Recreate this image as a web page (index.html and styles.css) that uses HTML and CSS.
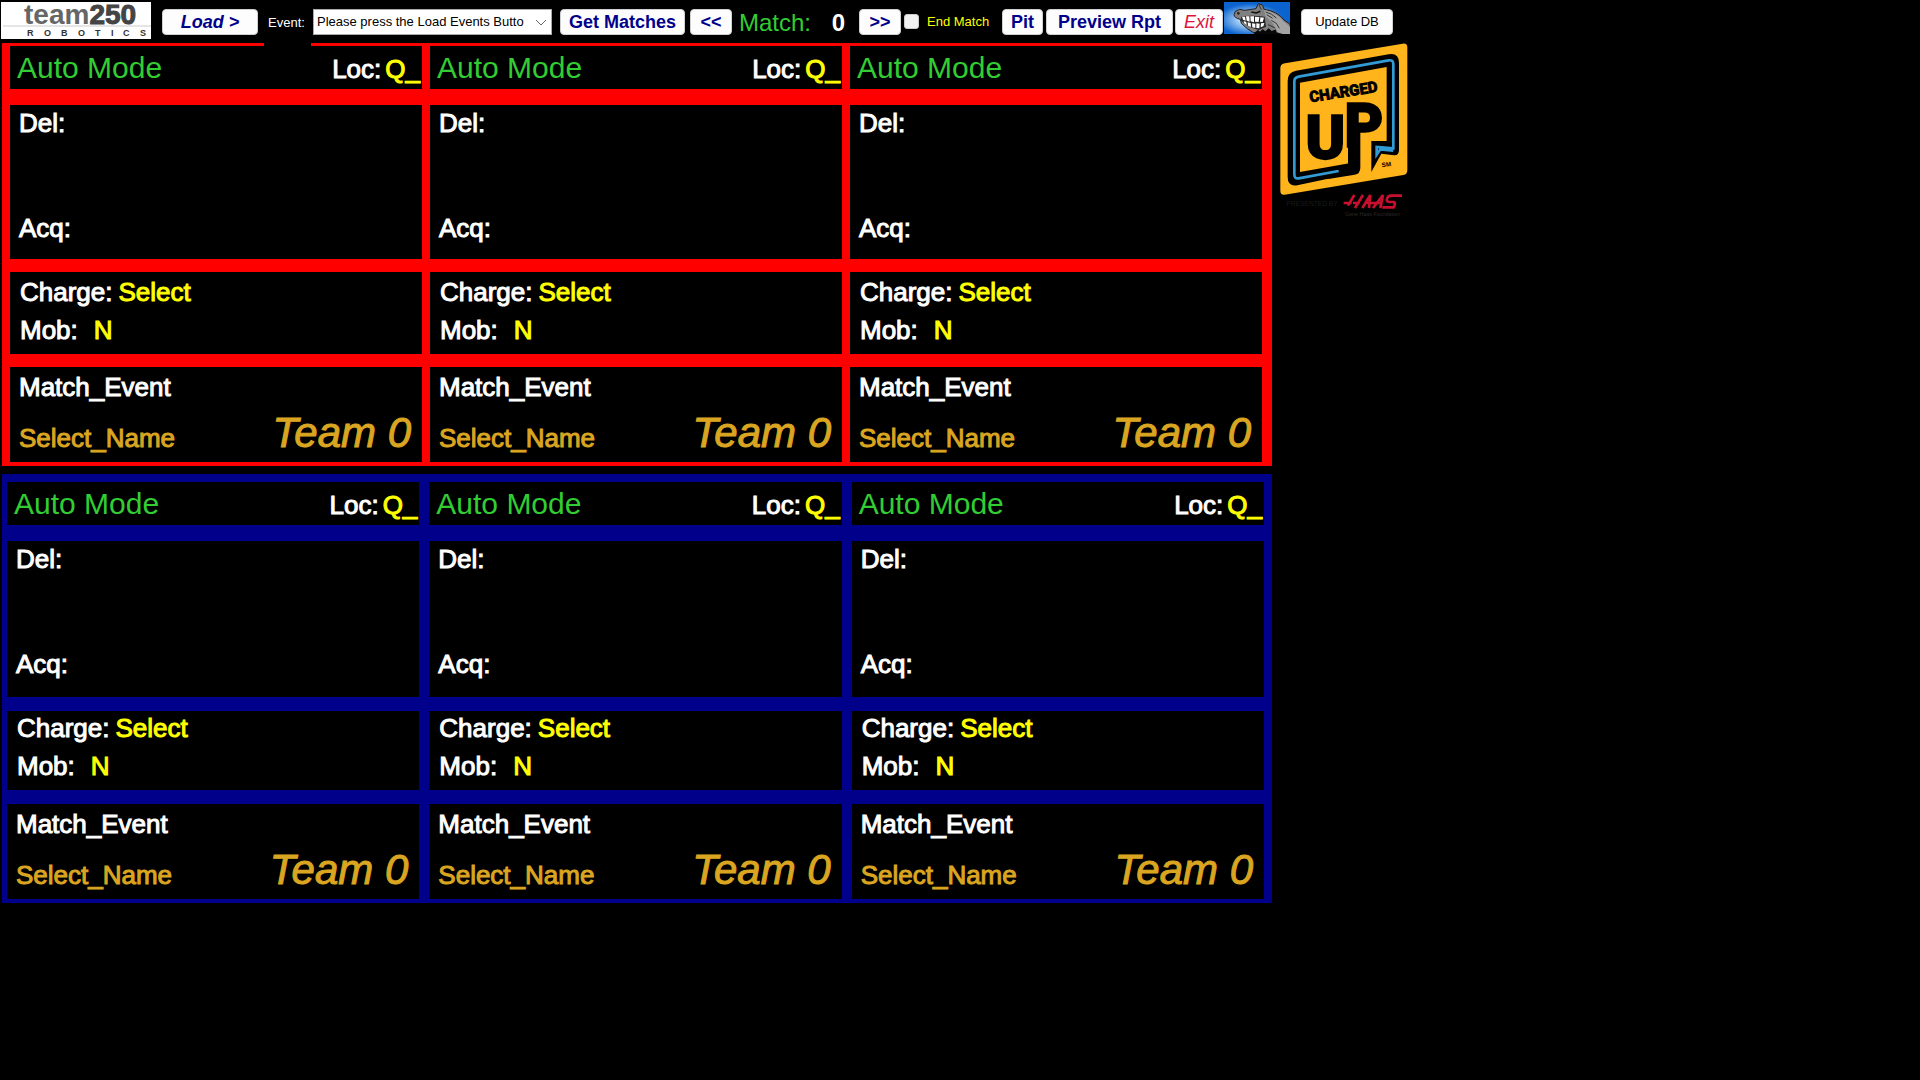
FILE: index.html
```html
<!DOCTYPE html>
<html lang="en">
<head>
<meta charset="utf-8">
<title>Team 250 Match Scouting</title>
<link rel="stylesheet" href="styles.css">
</head>
<body>
<header class="toolbar">
  <svg class="team-logo" viewBox="0 0 150 37" role="img" aria-label="team250 Robotics">
    <rect width="150" height="37" fill="#fff"/>
    <path d="M2 24H150" stroke="#ccc"/>
    <text x="23" y="22" class="logo-team">team<tspan class="logo-num">250</tspan></text>
    <text y="34" x="26 43 60 77 94 110 122 139" class="logo-sub">ROBOTICS</text>
  </svg>
  <button class="btn btn-load" type="button">Load &gt;</button>
  <label class="small event-label" for="event">Event:</label>
  <div class="select-wrap">
    <select id="event" class="event-select"><option>Please press the Load Events Butto</option></select>
    <svg class="chevron" viewBox="0 0 12 8" aria-hidden="true"><path d="M1 1l5 5 5-5" fill="none" stroke="#666"/></svg>
  </div>
  <button class="btn btn-matches" type="button">Get Matches</button>
  <button class="btn btn-step" type="button">&lt;&lt;</button>
  <div class="match"><span class="match-label">Match:</span><output class="match-number">0</output></div>
  <button class="btn btn-step" type="button">&gt;&gt;</button>
  <input class="end-check" type="checkbox" id="end-match">
  <label class="small end-label" for="end-match">End Match</label>
  <button class="btn btn-pit" type="button">Pit</button>
  <button class="btn btn-preview" type="button">Preview Rpt</button>
  <button class="btn btn-exit" type="button">Exit</button>
  <svg class="mascot" viewBox="0 0 198 96" role="img" aria-label="Team mascot">
    <defs><radialGradient id="glow" cx=".4" cy=".55" r=".5"><stop offset=".3" stop-color="#b9dcfb"/><stop offset="1" stop-color="#0a63cf"/></radialGradient></defs>
    <rect width="198" height="96" fill="url(#glow)"/>
    <path d="M34 28Q46 18 62 25L96 20 103 5 116 10 120 22Q160 27 180 54L198 66V96H104Q85 93 70 80L52 64 49 52Q30 48 30 38Z" fill="#808080" stroke="#222" stroke-width="3"/>
    <path d="M120 24Q160 32 178 58L198 74V96H150Q160 66 126 45Z" fill="#a4a4a4"/>
    <path d="M105 8l7 15M125 30q20 5 32 18M142 55q18 6 24 24M132 68l22 10M128 38l18 11" fill="none" stroke="#333" stroke-width="3"/>
    <path d="M52 44Q80 38 122 44L126 74 104 84Q68 75 50 54Z" fill="#252525"/>
    <path d="M54 44l9 0 2 12-8-3zM66 43h10l1 16-9-3zM79 43h11v18l-10-3zM93 44l13 1-2 15-11-1zM109 46l11 1-4 13-8-1zM59 57l8 3 1 9-8-6zM71 61l9 2 1 12-9-4zM84 64l10 1v13l-9-2zM97 64l10 1-1 14-9-1zM111 64l10-1-3 10-8 3z" fill="#fff"/>
    <circle cx="43" cy="34" r="4" fill="#222"/><path d="M82 30l15 3 12-5" fill="none" stroke="#111" stroke-width="5"/>
    <path d="M90 93l12-9 6 5 8-8 8 7 10-9 9 8 13-5 2 9 18 5H90z" fill="#080808"/>
  </svg>
  <button class="btn btn-update" type="button">Update DB</button>
</header>

<main class="page">
  <div class="board">
    <section class="alliance red" aria-label="Red alliance"></section>
    <section class="alliance blue" aria-label="Blue alliance"></section>
  </div>
  <aside class="side">
    <svg class="game-logo" viewBox="60 36 384 540" role="img" aria-label="Charged Up presented by Haas">
      <path d="M75 97L428 38Q442 36 442 49V418Q442 430 430 432L74 491Q61 493 61 479V111Q61 99 75 97Z" fill="#ffb41c"/>
      <path d="M108 119L386 70Q417 65 417 96V356Q417 374 402 373L364 368 334 423V330L380 330V108L120 155V423L268 397V430L112 463Q83 468 83 438V150Q83 123 108 119Z" fill="#000"/>
      <path d="M236 420L116 442Q103 444 103 430V152Q103 139 116 137L386 88Q400 86 400 99V352L350 348 350 371 361 355 400 359" fill="none" stroke="#329bd6" stroke-width="8"/>
      <path d="M264 300H301V410Q301 428 284 431L200 445 264 415Z" fill="#000"/>
      <text class="game-title" x="151" y="214" transform="rotate(-9 151 214)">CHARGED</text>
      <text class="game-up" x="138 254" y="381 345">UP</text>
      <text class="game-mark" x="366" y="409" transform="rotate(-9 366 409)">SM</text>
      <text class="game-by" x="79" y="526">PRESENTED BY</text>
      <path d="M251 516H275M264 524L283 492M285 531L309 492M279 516H299M307 531L331 492 327 531M339 531L369 492 361 531M320 516H366M426 494H393Q384 494 381 503T388 513H402Q408 514 401 529H367" fill="none" stroke="#c8102e" stroke-width="8"/>
      <text class="game-foot" x="255" y="554">Gene Haas Foundation</text>
    </svg>
  </aside>
</main>

<template id="station">
  <article class="station">
    <div class="cell head"><span class="mode">Auto Mode</span><span class="pair">Loc:<span class="value">Q_</span></span></div>
    <div class="cell pieces"><span>Del:</span><span>Acq:</span></div>
    <div class="cell charge"><span class="pair">Charge:<span class="value">Select</span></span><span class="pair mob">Mob:<span class="value">N</span></span></div>
    <div class="cell team"><span>Match_Event</span><div class="who"><span>Select_Name</span><span class="team-number">Team 0</span></div></div>
  </article>
</template>
<script src="board.js"></script>
</body>
</html>
```
FILE: styles.css
```css
* { box-sizing: border-box; }

body {
  margin: 0;
  background: #000;
  color: #fff;
  font-family: "Liberation Sans", Arial, sans-serif;
}

/* Toolbar */
.toolbar {
  display: flex;
  align-items: center;
  min-height: 43px;
  padding: 2px 0 2px 1px;
}
.toolbar > * { flex-shrink: 0; }

.team-logo { width: 150px; height: 37px; align-self: flex-start; margin-right: 11px; overflow: visible; }
.logo-team { font-size: 28px; font-weight: bold; fill: #666; }
.logo-num { fill: #444; stroke: #444; stroke-width: 1px; }
.logo-sub { font-size: 9px; font-weight: bold; fill: #333; }

.btn {
  height: 26px;
  padding: 2px 0 0;
  border: 1px solid #d0d0d0;
  border-radius: 4px;
  background: #fdfdfd;
  color: #00008b;
  font: bold 18px "Liberation Sans", Arial, sans-serif;
  white-space: nowrap;
}
.btn-load { width: 96px; margin-right: 10px; font-style: italic; }
.btn-matches { width: 125px; margin-right: 5px; }
.btn-step { width: 42px; }
.btn-pit { width: 41px; margin-right: 3px; }
.btn-preview { width: 127px; margin-right: 2px; }
.btn-exit { width: 48px; margin-right: 1px; color: #dc143c; font-weight: normal; font-style: italic; }
.btn-update { width: 92px; padding: 0; color: #000; font-size: 13px; font-weight: normal; }

.small { font-size: 13px; line-height: 20px; }
.event-label { width: 45px; padding-top: 2px; }
.select-wrap { position: relative; width: 239px; margin-right: 8px; }
.event-select {
  display: block;
  width: 100%;
  height: 26px;
  padding: 0 24px 0 3px;
  border: 1px solid #aaa;
  border-radius: 0;
  appearance: none;
  background: #fff;
  color: #000;
  font: 13px "Liberation Sans", Arial, sans-serif;
}
.chevron { position: absolute; right: 5px; top: 10px; width: 12px; height: 8px; pointer-events: none; }

.match { display: flex; width: 127px; padding: 2px 14px 0 7px; justify-content: space-between; font-size: 24px; line-height: 26px; }
.match-label { color: #32cd32; }
.match-number { font-weight: bold; }
.end-check {
  width: 15px;
  height: 15px;
  margin: 0 8px 0 3px;
  appearance: none;
  border: 1px solid #ccc;
  border-radius: 3px;
  background: #f2f2f2;
}
.end-label { width: 75px; color: #ff0; }
.mascot { width: 66px; height: 32px; align-self: flex-start; margin-right: 11px; }

/* Scouting board */
.page { display: grid; grid-template-columns: minmax(0, 2fr) minmax(0, 1fr); }
.board { display: flex; flex-direction: column; gap: 8px; padding: 0 8px 0 2px; }

.alliance { display: grid; grid-template-columns: repeat(3, minmax(0, 1fr)); position: relative; }
.red { gap: 8px; padding: 3px 10px 4px 8px; background: #f00; }
.blue { gap: 10px; padding: 8px 8px 4px 5px; background: #00008b; }
.red::before {
  content: "";
  position: absolute;
  top: 0;
  left: 262px;
  width: 47px;
  height: 3px;
  background: #000;
}

.station { display: grid; font-size: 26px; line-height: 28px; -webkit-text-stroke: 1px; }
.red .station { grid-template-rows: 46px 154px 82px 95px; row-gap: 13px; }
.blue .station { grid-template-rows: 45px 156px 79px 95px; row-gap: 14px; }

.cell { display: flex; flex-direction: column; padding: 6px 8px; background: #000; }
.station .head { flex-direction: row; justify-content: space-between; align-items: baseline; height: 43px; padding: 5px 2px 0 7px; }
.mode { color: #32cd32; font-size: 30px; line-height: 34px; -webkit-text-stroke: 0; }
.pair { display: flex; gap: 6px; }
.value { color: #ff0; }
.head .pair { gap: 4px; }
.pieces { gap: 77px; padding: 4px 9px; }
.charge { gap: 10px; padding-left: 10px; }
.blue .charge { padding-top: 3px; }
.mob { gap: 16px; }
.team { justify-content: space-between; padding: 6px 11px 9px 9px; }
.who { display: flex; justify-content: space-between; align-items: baseline; color: #daa520; }
.team-number { font-size: 42px; font-style: italic; line-height: 40px; }

/* Season artwork */
.game-logo { display: block; width: 128px; height: 180px; }
.game-title { font: bold 45px Roboto, sans-serif; stroke: #000; stroke-width: 3px; }
.game-up { font: bold 176px Roboto, sans-serif; stroke: #000; stroke-width: 10px; }
.game-mark { font: bold 19px "Liberation Sans", sans-serif; }
.game-by { font: 20px "Liberation Sans", sans-serif; fill: #1a1a1a; }
.game-foot { font: 16px "Liberation Sans", sans-serif; fill: #2a2a2a; }
```
FILE: board.js
```js
const template = document.getElementById("station");
for (const alliance of document.querySelectorAll(".alliance")) {
  for (let i = 0; i < 3; i++) alliance.append(template.content.cloneNode(true));
}
```
